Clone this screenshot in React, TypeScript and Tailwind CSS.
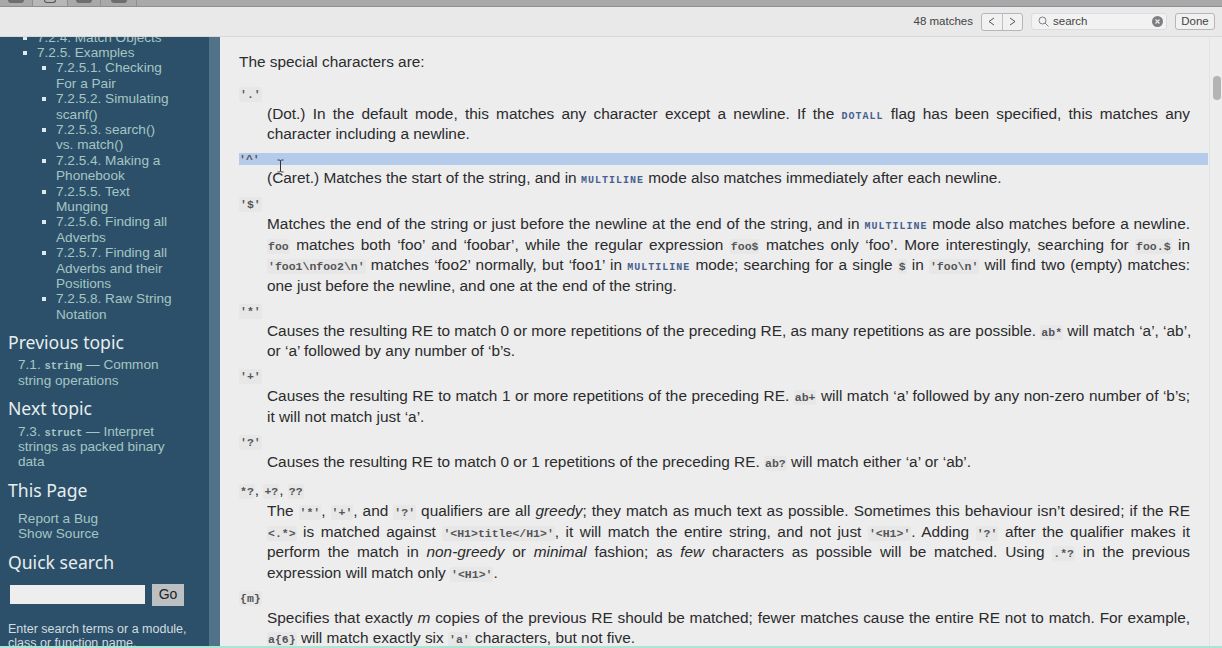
import type { ReactNode } from "react";

const SANS = "font-['Liberation_Sans',Arial,sans-serif]";

function Lit({ children, box = true }: { children: ReactNode; box?: boolean }) {
  return (
    <code
      className={`font-['Liberation_Mono','DejaVu_Sans_Mono',monospace] text-[11.5px] leading-none font-bold text-[#555557] ${
        box ? "bg-[#e7e7e8] rounded-[2px] px-[1px] py-[1px]" : ""
      }`}
    >
      {children}
    </code>
  );
}

function Ref({ children }: { children: ReactNode }) {
  return (
    <span className="font-['Liberation_Mono',monospace] text-[10px] leading-none tracking-[1px] font-bold text-[#47618f]">
      {children}
    </span>
  );
}

function Term({ children }: { children: ReactNode }) {
  return <div className="h-[20px] leading-[17px] text-[#333]">{children}</div>;
}

// each rendered line of the paragraph, stretched to the column like the original
function Body({ lines }: { lines: ReactNode[] }) {
  return (
    <div className="ml-[28px] w-[923px] text-[15.4px] leading-[20.5px] text-[#2b2b2b]">
      {lines.map((line, i) => (
        <div
          key={i}
          className={`whitespace-nowrap ${i < lines.length - 1 ? "[text-align-last:justify]" : ""}`}
        >
          {line}
        </div>
      ))}
    </div>
  );
}

function Entry({ term, lines, mb = "mb-[4.5px]" }: { term: ReactNode; lines: ReactNode[]; mb?: string }) {
  return (
    <div className={mb}>
      <Term>{term}</Term>
      <Body lines={lines} />
    </div>
  );
}

function TocItem({ children, sub }: { children: ReactNode; sub?: boolean }) {
  return (
    <div className={`relative ${sub ? "ml-[56px] w-[119px]" : "ml-[37px]"}`}>
      <span className="absolute -left-[14px] top-[6px] w-[4px] h-[4px] bg-[#dfe8ea]" />
      {children}
    </div>
  );
}

function SideHeading({ children, className = "" }: { children: ReactNode; className?: string }) {
  return (
    <div className={`ml-[8px] font-['Noto_Sans',sans-serif] text-[17.6px] leading-[24px] text-[#e6eeee] ${className}`}>
      {children}
    </div>
  );
}

function Sidebar() {
  return (
    <aside className={`${SANS} w-[209px] shrink-0 bg-[#2c5069] overflow-hidden text-[13.6px] leading-[15.4px] text-[#a5c6c4]`}>
      <div className="-mt-[7.5px]">
        <TocItem>7.2.4. Match Objects</TocItem>
        <TocItem>7.2.5. Examples</TocItem>
        <TocItem sub>7.2.5.1. Checking For a Pair</TocItem>
        <TocItem sub>7.2.5.2. Simulating scanf()</TocItem>
        <TocItem sub>7.2.5.3. search() vs. match()</TocItem>
        <TocItem sub>7.2.5.4. Making a Phonebook</TocItem>
        <TocItem sub>7.2.5.5. Text Munging</TocItem>
        <TocItem sub>7.2.5.6. Finding all Adverbs</TocItem>
        <TocItem sub>7.2.5.7. Finding all Adverbs and their Positions</TocItem>
        <TocItem sub>7.2.5.8. Raw String Notation</TocItem>
      </div>
      <SideHeading className="mt-[7.5px]">Previous topic</SideHeading>
      <div className="ml-[18px] mt-[3.5px] w-[160px]">
        7.1. <span className="font-['Liberation_Mono',monospace] text-[10.5px] leading-none font-bold">string</span> — Common string operations
      </div>
      <SideHeading className="mt-[7.5px]">Next topic</SideHeading>
      <div className="ml-[18px] mt-[4px] w-[160px]">
        7.3. <span className="font-['Liberation_Mono',monospace] text-[10.5px] leading-none font-bold">struct</span> — Interpret strings as packed binary data
      </div>
      <SideHeading className="mt-[8px]">This Page</SideHeading>
      <div className="ml-[18px] mt-[9px]">
        <div>Report a Bug</div>
        <div>Show Source</div>
      </div>
      <SideHeading className="mt-[8px]">Quick search</SideHeading>
      <div className="ml-[10px] mt-[10px] flex items-center gap-[7px]">
        <div className="w-[135px] h-[19px] bg-[#eeeeef]" />
        <div className="w-[32px] h-[22px] bg-[#bcc0c3] flex items-center justify-center text-[14px] text-[#222]">Go</div>
      </div>
      <div className="ml-[8px] mt-[16px] text-[12.5px] leading-[14.5px] text-[#d2dde0]">
        Enter search terms or a module,
        <br />
        class or function name.
      </div>
    </aside>
  );
}

function FindBar() {
  return (
    <div className={`${SANS} h-[30px] shrink-0 bg-[#e9e9ea] border-b border-[#d8d8d9] flex items-center justify-end pr-[7px] text-[11.5px] text-[#3c3c3c]`}>
      <span className="mr-[8px] text-[#444]">48 matches</span>
      <div className="flex h-[18px] w-[42px] rounded-[3px] border border-[#b6b6b8] bg-[#f1f1f2] mr-[8px]">
        <div className="flex-1 border-r border-[#c0c0c2] flex items-center justify-center">
          <svg width="7" height="9" viewBox="0 0 7 9" fill="none" stroke="#555" strokeWidth="1"><path d="M6 1 1 4.5 6 8" /></svg>
        </div>
        <div className="flex-1 flex items-center justify-center">
          <svg width="7" height="9" viewBox="0 0 7 9" fill="none" stroke="#555" strokeWidth="1"><path d="M1 1 6 4.5 1 8" /></svg>
        </div>
      </div>
      <div className="relative flex items-center h-[17px] w-[136px] rounded-[3px] border border-[#dcdcde] bg-[#f2f2f3] pl-[6px] mr-[8px]">
        <svg width="11" height="11" viewBox="0 0 11 11" fill="none" stroke="#808082" strokeWidth="1"><circle cx="4.5" cy="4.5" r="3.5" /><path d="M7 7l3.5 3.5" /></svg>
        <span className="ml-[4px] text-[#444]">search</span>
        <span className="absolute right-[3px] top-[2px] w-[11px] h-[11px] rounded-full bg-[#7e7e80] flex items-center justify-center">
          <svg width="5" height="5" viewBox="0 0 5 5" stroke="#eee" strokeWidth="1.1"><path d="M0.5 0.5l4 4M4.5 0.5l-4 4" /></svg>
        </span>
      </div>
      <div className="h-[17px] w-[40px] rounded-[3px] border border-[#b6b6b8] bg-[#f1f1f2] flex items-center justify-center text-[#444]">Done</div>
    </div>
  );
}

function TopStrip() {
  return (
    <div className="h-[7px] shrink-0 bg-[#a9a8aa] flex items-start border-b border-[#8f8f90]">
      <div className="w-[33px] h-full border-r border-[#8f8f90] flex">
        <div className="ml-[8px] w-[16px] h-[3px] bg-[#6e6e70] rounded-b-[3px]" />
      </div>
      <div className="w-[35px] h-full border-r border-[#8f8f90] bg-[#b7b6b8] flex justify-center">
        <div className="w-[12px] h-[3px] border-b border-x border-[#555] rounded-b-full" />
      </div>
      <div className="w-[33px] h-full border-r border-[#8f8f90] flex justify-center">
        <div className="w-[16px] h-[3px] bg-[#6e6e70] rounded-b-[3px]" />
      </div>
      <div className="w-[36px] h-full border-r border-[#8f8f90] flex justify-center">
        <div className="w-[16px] h-[3px] bg-[#6e6e70] rounded-b-[3px]" />
      </div>
    </div>
  );
}

function Content() {
  return (
    <main className={`${SANS} flex-1 min-w-0 bg-[#ededee] overflow-hidden flex`}>
      <div className="w-[989px] shrink-0 pl-[19px] pt-[15px] text-[15.4px] leading-[20.5px] text-[#2b2b2b]">
        <div className="mb-[11px]">The special characters are:</div>
        <Entry
          term={<Lit>'.'</Lit>}
          mb="mb-[8px]"
          lines={[
            <>(Dot.) In the default mode, this matches any character except a newline. If the <Ref>DOTALL</Ref> flag has been specified, this matches any</>,
            "character including a newline.",
          ]}
        />
        <div className="mb-[6px]">
          <div className="w-[969px] h-[12px] bg-[#b5cbec] leading-[10px] text-[#333] relative">
            <Lit box={false}>'^'</Lit>
            <svg className="absolute left-[38px] top-[6px]" width="7" height="14" viewBox="0 0 7 14" fill="none" stroke="#333" strokeWidth="1">
              <path d="M0.5 1c1.5 0 3 0 3 1v10c0 1-1.5 1-3 1M6.5 1c-1.5 0-3 0-3 1M6.5 13c-1.5 0-3 0-3-1" />
            </svg>
          </div>
          <div className="h-[3px]" />
          <Body lines={[<>(Caret.) Matches the start of the string, and in <Ref>MULTILINE</Ref> mode also matches immediately after each newline.</>]} />
        </div>
        <Entry
          term={<Lit>'$'</Lit>}
          lines={[
            <>Matches the end of the string or just before the newline at the end of the string, and in <Ref>MULTILINE</Ref> mode also matches before a newline.</>,
            <><Lit>foo</Lit> matches both ‘foo’ and ‘foobar’, while the regular expression <Lit>foo$</Lit> matches only ‘foo’. More interestingly, searching for <Lit>foo.$</Lit> in</>,
            <><Lit>'foo1\nfoo2\n'</Lit> matches ‘foo2’ normally, but ‘foo1’ in <Ref>MULTILINE</Ref> mode; searching for a single <Lit>$</Lit> in <Lit>'foo\n'</Lit> will find two (empty) matches:</>,
            "one just before the newline, and one at the end of the string.",
          ]}
        />
        <Entry
          term={<Lit>'*'</Lit>}
          lines={[
            <>Causes the resulting RE to match 0 or more repetitions of the preceding RE, as many repetitions as are possible. <Lit>ab*</Lit> will match ‘a’, ‘ab’,</>,
            "or ‘a’ followed by any number of ‘b’s.",
          ]}
        />
        <Entry
          term={<Lit>'+'</Lit>}
          lines={[
            <>Causes the resulting RE to match 1 or more repetitions of the preceding RE. <Lit>ab+</Lit> will match ‘a’ followed by any non-zero number of ‘b’s;</>,
            "it will not match just ‘a’.",
          ]}
        />
        <Entry
          term={<Lit>'?'</Lit>}
          mb="mb-[9px]"
          lines={[<>Causes the resulting RE to match 0 or 1 repetitions of the preceding RE. <Lit>ab?</Lit> will match either ‘a’ or ‘ab’.</>]}
        />
        <Entry
          term={<><Lit>*?</Lit>, <Lit>+?</Lit>, <Lit>??</Lit></>}
          lines={[
            <>The <Lit>'*'</Lit>, <Lit>'+'</Lit>, and <Lit>'?'</Lit> qualifiers are all <em>greedy</em>; they match as much text as possible. Sometimes this behaviour isn’t desired; if the RE</>,
            <><Lit>&lt;.*&gt;</Lit> is matched against <Lit>'&lt;H1&gt;title&lt;/H1&gt;'</Lit>, it will match the entire string, and not just <Lit>'&lt;H1&gt;'</Lit>. Adding <Lit>'?'</Lit> after the qualifier makes it</>,
            <>perform the match in <em>non-greedy</em> or <em>minimal</em> fashion; as <em>few</em> characters as possible will be matched. Using <Lit>.*?</Lit> in the previous</>,
            <>expression will match only <Lit>'&lt;H1&gt;'</Lit>.</>,
          ]}
        />
        <Entry
          term={<Lit>{"{m}"}</Lit>}
          lines={[
            <>Specifies that exactly <em>m</em> copies of the previous RE should be matched; fewer matches cause the entire RE not to match. For example,</>,
            <><Lit>a{"{6}"}</Lit> will match exactly six <Lit>'a'</Lit> characters, but not five.</>,
          ]}
        />
      </div>
      {/* scrollbar gutter */}
      <div className="w-[13px] shrink-0 border-l border-[#e2e2e3] pt-[39px] pl-[3px]">
        <div className="w-[8px] h-[24px] rounded-full bg-[#b4b4b6]" />
      </div>
    </main>
  );
}

export default function App() {
  return (
    <div className="w-[1222px] h-[648px] overflow-hidden flex flex-col">
      <TopStrip />
      <FindBar />
      <div className="flex-1 min-h-0 flex">
        <Sidebar />
        <div className="w-[11px] shrink-0 bg-[#517289]" />
        <Content />
      </div>
      <div className="h-[2px] shrink-0 bg-[#a9e6d3]" />
    </div>
  );
}
